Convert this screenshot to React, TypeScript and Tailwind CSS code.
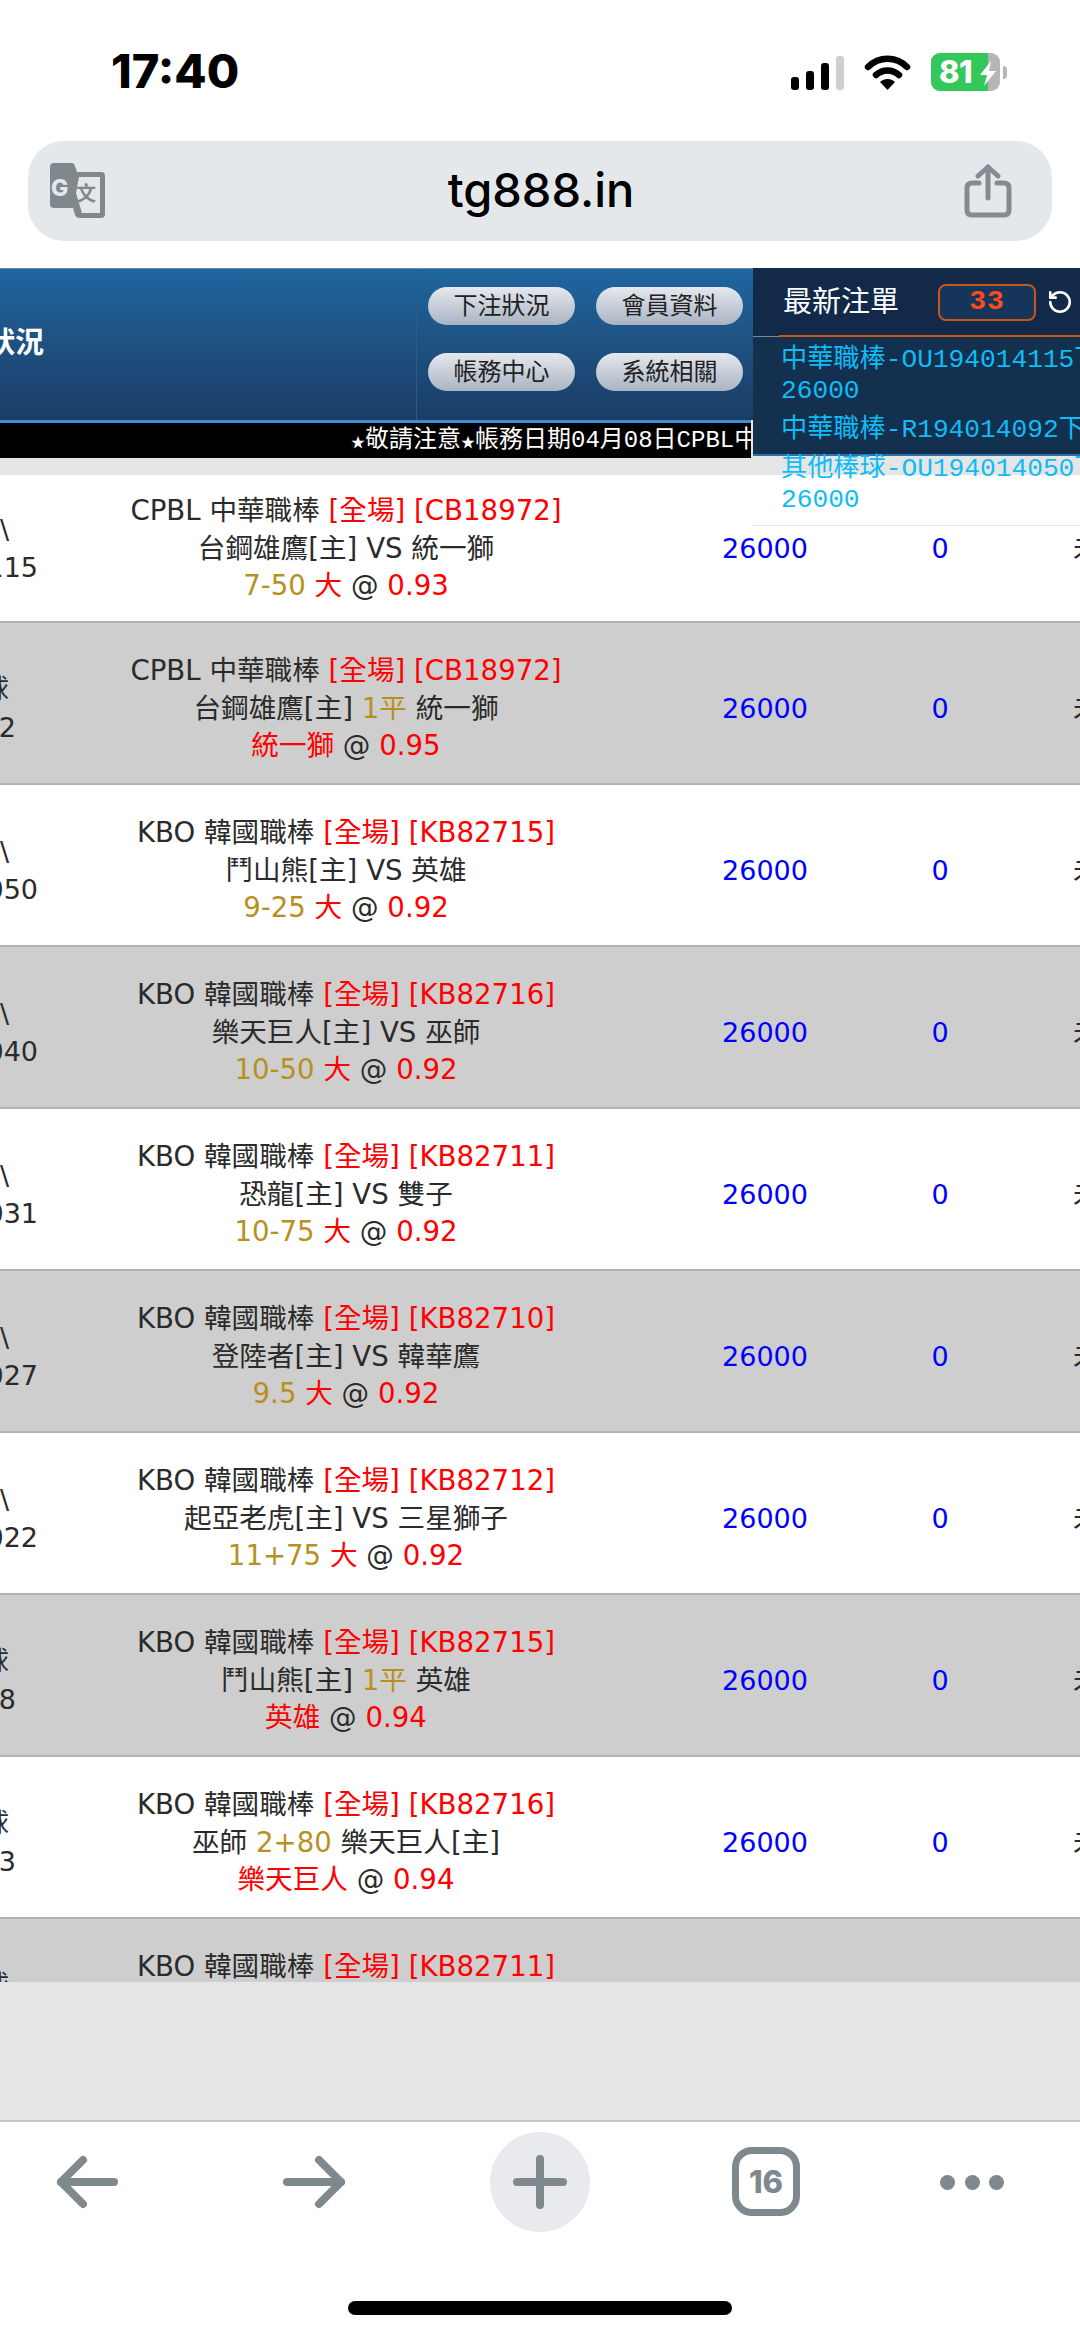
import { RotateCcw } from 'lucide-react';

type Bet = {
  league: string;
  code: string;
  left: string;
  leftEnd: string;
  home: string;
  mid: string;
  away: string;
  line?: string;
  pick: string;
  odds: string;
};

const CPBL = 'CPBL 中華職棒';
const KBO = 'KBO 韓國職棒';

const bets: Bet[] = [
  { league: CPBL, code: 'CB18972', left: '大小\\', leftEnd: 'OU194014115', home: '台鋼雄鷹[主]', mid: 'VS', away: '統一獅', line: '7-50', pick: '大', odds: '0.93' },
  { league: CPBL, code: 'CB18972', left: '讓球', leftEnd: 'R194014092', home: '台鋼雄鷹[主]', mid: '1平', away: '統一獅', pick: '統一獅', odds: '0.95' },
  { league: KBO, code: 'KB82715', left: '大小\\', leftEnd: 'OU194014050', home: '鬥山熊[主]', mid: 'VS', away: '英雄', line: '9-25', pick: '大', odds: '0.92' },
  { league: KBO, code: 'KB82716', left: '大小\\', leftEnd: 'OU194014040', home: '樂天巨人[主]', mid: 'VS', away: '巫師', line: '10-50', pick: '大', odds: '0.92' },
  { league: KBO, code: 'KB82711', left: '大小\\', leftEnd: 'OU194014031', home: '恐龍[主]', mid: 'VS', away: '雙子', line: '10-75', pick: '大', odds: '0.92' },
  { league: KBO, code: 'KB82710', left: '大小\\', leftEnd: 'OU194014027', home: '登陸者[主]', mid: 'VS', away: '韓華鷹', line: '9.5', pick: '大', odds: '0.92' },
  { league: KBO, code: 'KB82712', left: '大小\\', leftEnd: 'OU194014022', home: '起亞老虎[主]', mid: 'VS', away: '三星獅子', line: '11+75', pick: '大', odds: '0.92' },
  { league: KBO, code: 'KB82715', left: '讓球', leftEnd: 'R194014018', home: '鬥山熊[主]', mid: '1平', away: '英雄', pick: '英雄', odds: '0.94' },
  { league: KBO, code: 'KB82716', left: '讓球', leftEnd: 'R194014013', home: '巫師', mid: '2+80', away: '樂天巨人[主]', pick: '樂天巨人', odds: '0.94' },
  { league: KBO, code: 'KB82711', left: '讓球', leftEnd: 'R194014008', home: '恐龍[主]', mid: '1平', away: '雙子', pick: '雙子', odds: '0.94' },
];

function StatusBar() {
  return (
    <div className="h-[141px] flex items-start justify-between pl-[111px] pr-[73px] pt-[43px]">
      <span className="font-['Inter',sans-serif] font-extrabold text-[47px] leading-[56px] text-black">17:40</span>
      <div className="flex items-center gap-[20px] pt-[10px]">
        <div className="flex items-end gap-[6.5px] h-[35px]">
          <div className="w-[8.5px] h-[13px] rounded-[3px] bg-black" />
          <div className="w-[8.5px] h-[19px] rounded-[3px] bg-black" />
          <div className="w-[8.5px] h-[27px] rounded-[3px] bg-black" />
          <div className="w-[8.5px] h-[34px] rounded-[3px] bg-[#cfcfcf]" />
        </div>
        <svg width="47" height="35" viewBox="0 0 47 35" fill="none">
          <path d="M4 12 C15 1 32 1 43 12" stroke="#000" strokeWidth="6.5" strokeLinecap="round" />
          <path d="M12 20 C19 14 28 14 35 20" stroke="#000" strokeWidth="6.5" strokeLinecap="round" />
          <path d="M16 27 C20 23 27 23 31 27 L23.5 35 Z" fill="#000" />
        </svg>
        <div className="flex items-center">
          <div className="relative w-[69px] h-[38px] rounded-[9px] overflow-hidden bg-[#b5b5b5]">
            <div className="h-full w-[57px] bg-[#34c759]" />
            <span className="absolute left-[8px] top-0 font-['Inter',sans-serif] font-extrabold text-[31px] leading-[38px] tracking-[-0.5px] text-white">
              81
            </span>
            <svg className="absolute left-[48px] top-[8px]" width="18" height="25" viewBox="0 0 18 25">
              <path d="M12 0 L1 14 H8 L5 25 L17 10 H10 Z" fill="#fff" />
            </svg>
          </div>
          <div className="w-[4px] h-[13px] ml-[3px] rounded-r-full bg-[#b5b5b5]" />
        </div>
      </div>
    </div>
  );
}

function TranslateIcon() {
  return (
    <svg width="56" height="56" viewBox="0 0 56 56">
      <path
        d="M4 0 H22 Q24 0 25 3 L27 9 H51 Q55 9 55 13 V51 Q55 55 51 55 H30 Q26 55 25 52 L23 45 H4 Q0 45 0 41 V4 Q0 0 4 0 Z"
        fill="#7f888c"
      />
      <path d="M29 14 H50 V50 H32 L26 30 Z" fill="#e5e8eb" />
      <text x="1" y="33" fontFamily="Inter, sans-serif" fontWeight="800" fontSize="23" fill="#e5e8eb">
        G
      </text>
      <text x="26" y="38" fontFamily="'Noto Sans CJK TC', sans-serif" fontWeight="700" fontSize="20" fill="#7f888c">
        文
      </text>
    </svg>
  );
}

function UrlBar() {
  return (
    <div className="mx-[28px] h-[100px] rounded-[36px] bg-[#e5e8eb] flex items-center justify-between pl-[22px] pr-[40px]">
      <TranslateIcon />
      <span className="font-['Inter',sans-serif] font-medium text-[47px] leading-none text-black pb-[4px] ml-[12px]">tg888.in</span>
      <svg width="48" height="54" viewBox="0 0 48 54" fill="none" stroke="#858c91" strokeWidth="5" strokeLinecap="round" strokeLinejoin="round">
        <path d="M15 19 H8 Q3 19 3 24 V46 Q3 51 8 51 H40 Q45 51 45 46 V24 Q45 19 40 19 H33" />
        <path d="M24 34 V3" />
        <path d="M14 12 L24 3 L34 12" />
      </svg>
    </div>
  );
}

function NavButton({ label }: { label: string }) {
  return (
    <div className="w-[147px] h-[38px] rounded-full bg-gradient-to-b from-[#e6e9ee] to-[#a9b4c3] flex items-center justify-center text-[24px] leading-none text-[#222]">
      {label}
    </div>
  );
}

function Header() {
  return (
    <div className="h-[152px] border-t border-[#5b93c0] bg-gradient-to-b from-[#1f669f] to-[#1b3d65] flex">
      <div className="w-[417px] border-r border-[#2a5c8b] flex items-center justify-end overflow-hidden">
        <span className="font-semibold text-[29px] leading-none text-white whitespace-nowrap mr-[372px] pb-[2px]">狀況</span>
      </div>
      <div className="grid grid-cols-[147px_147px] gap-x-[21px] gap-y-[28px] pl-[11px] pt-[18px] content-start">
        <NavButton label="下注狀況" />
        <NavButton label="會員資料" />
        <NavButton label="帳務中心" />
        <NavButton label="系統相關" />
      </div>
    </div>
  );
}

function Ticker() {
  return (
    <div className="h-[38px] w-[751px] bg-black border-t-[3px] border-[#3b8fd6] overflow-hidden flex items-center pl-[351px]">
      <span className="font-['Liberation_Mono','Noto_Sans_CJK_TC',monospace] text-[24px] leading-none text-white whitespace-nowrap">
        <span className="text-[14px]">★</span>敬請注意<span className="text-[14px]">★</span>帳務日期04月08日CPBL中華職棒
      </span>
    </div>
  );
}

function LatestPanel() {
  const items = [
    ['中華職棒-OU194014115下注金額', '26000'],
    ['中華職棒-R194014092下注金額'],
    ['其他棒球-OU194014050下注金額', '26000'],
  ];
  return (
    <div className="absolute top-0 left-[753px] right-0 h-[258px] border-b border-[#e3e3e3] overflow-hidden">
      <div className="h-[188px] bg-[#14304f] border-b-2 border-[#2d70b0]">
        <div className="h-[69px] bg-[#12294a] border-b border-[#7d8a99] flex items-center pl-[30px] relative">
          <span className="text-[29px] leading-none text-white w-[155px]">最新注單</span>
          <div className="w-[98px] h-[37px] rounded-[8px] border-2 border-[#c8561a] bg-[#15355a] flex items-center justify-center font-['Liberation_Mono',monospace] font-bold text-[28px] tracking-[1px] text-[#ff4a1c]">
            33
          </div>
          <RotateCcw size={26} color="#fff" strokeWidth={2.4} className="ml-[11px]" />
          <div className="absolute left-[26px] right-0 -bottom-[1px] h-[2px] bg-[#c8561a]" />
        </div>
        <div className="pl-[28px] pt-[8px] flex flex-col gap-[8px] font-['Liberation_Mono','Noto_Sans_CJK_TC',monospace] text-[26.2px] leading-[31px] text-[#10bcf5] whitespace-nowrap">
          {items.map((lines, i) => (
            <div key={i}>
              {lines.map((line) => (
                <div key={line}>{line}</div>
              ))}
            </div>
          ))}
        </div>
      </div>
    </div>
  );
}

function BetRow({ bet, index }: { bet: Bet; index: number }) {
  const first = index === 0;
  const even = index % 2 === 1;
  const isLine = bet.mid !== 'VS';
  const short = bet.leftEnd.startsWith('R');
  return (
    <div
      className={`flex border-b-2 border-[#b2b2b2] leading-[37.5px] text-[27px] text-[#2b2b2b] ${
        first ? 'h-[148px] pt-[1px]' : 'h-[162px] pt-[11px]'
      } ${even ? 'bg-[#cecece]' : 'bg-white'}`}
    >
      <div className="w-[38px] shrink-0 overflow-hidden whitespace-nowrap flex flex-col justify-center items-end">
        <div className="pr-[29px]">{bet.left}</div>
        <div className={short ? 'pr-[22px]' : ''}>{bet.leftEnd}</div>
      </div>
      <div className="w-[616px] shrink-0 flex flex-col justify-center items-center whitespace-nowrap text-[27.6px]">
        <div>
          {bet.league} <span className="text-[#ff0000]">[全場] [{bet.code}]</span>
        </div>
        <div>
          {bet.home} {isLine ? <span className="text-[#b8901f]">{bet.mid}</span> : bet.mid} {bet.away}
        </div>
        <div>
          {bet.line && <span className="text-[#b8901f]">{bet.line} </span>}
          <span className="text-[#ff0000]">{bet.pick}</span> @ <span className="text-[#ff0000]">{bet.odds}</span>
        </div>
      </div>
      <div className="w-[222px] shrink-0 flex items-center justify-center text-[#0000ff]">26000</div>
      <div className="w-[128px] shrink-0 flex items-center justify-center text-[#0000ff]">0</div>
      <div className="flex-1 overflow-hidden flex items-center pl-[69px] whitespace-nowrap">未結算</div>
    </div>
  );
}

function Toolbar() {
  return (
    <div className="h-[217px] border-t-2 border-[#c4c4c4] bg-white flex flex-col">
      <div className="flex items-start h-[179px] pt-[10px] pl-[56px]">
        <div className="w-[226px] h-[100px] flex items-center">
          <svg width="64" height="54" viewBox="0 0 64 54" fill="none" stroke="#7f888c" strokeWidth="8" strokeLinecap="round" strokeLinejoin="round">
            <path d="M58 27 H5" />
            <path d="M27 5 L5 27 L27 49" />
          </svg>
        </div>
        <div className="w-[208px] h-[100px] flex items-center">
          <svg width="64" height="54" viewBox="0 0 64 54" fill="none" stroke="#7f888c" strokeWidth="8" strokeLinecap="round" strokeLinejoin="round">
            <path d="M5 27 H59" />
            <path d="M37 5 L59 27 L37 49" />
          </svg>
        </div>
        <div className="w-[100px] h-[100px] rounded-full bg-[#e9eaee] flex items-center justify-center">
          <svg width="54" height="54" viewBox="0 0 54 54" fill="none" stroke="#7f888c" strokeWidth="8" strokeLinecap="round">
            <path d="M27 4 V50" />
            <path d="M4 27 H50" />
          </svg>
        </div>
        <div className="ml-[142px] w-[68px] h-[69px] mt-[15px] rounded-[20px] border-[7px] border-[#7f888c] flex items-center justify-center font-['Inter',sans-serif] font-extrabold text-[31px] leading-none text-[#7f888c]">
          16
        </div>
        <div className="ml-[140px] h-[100px] flex items-center gap-[9.5px]">
          <div className="w-[15px] h-[15px] rounded-full bg-[#7f888c]" />
          <div className="w-[15px] h-[15px] rounded-full bg-[#7f888c]" />
          <div className="w-[15px] h-[15px] rounded-full bg-[#7f888c]" />
        </div>
      </div>
      <div className="w-[384px] h-[14px] mx-auto rounded-full bg-black" />
    </div>
  );
}

export default function App() {
  return (
    <div className="w-[1080px] h-[2337px] overflow-hidden bg-white flex flex-col font-['DejaVu_Sans','Noto_Sans_CJK_TC',sans-serif]">
      <StatusBar />
      <UrlBar />
      <div className="mt-[27px] h-[1852px] relative bg-[#e5e5e5]">
        <Header />
        <Ticker />
        <div className="h-[17px]" />
        <div className="h-[1507px] overflow-hidden">
          {bets.map((bet, i) => (
            <BetRow key={i} bet={bet} index={i} />
          ))}
        </div>
        <LatestPanel />
      </div>
      <Toolbar />
    </div>
  );
}
